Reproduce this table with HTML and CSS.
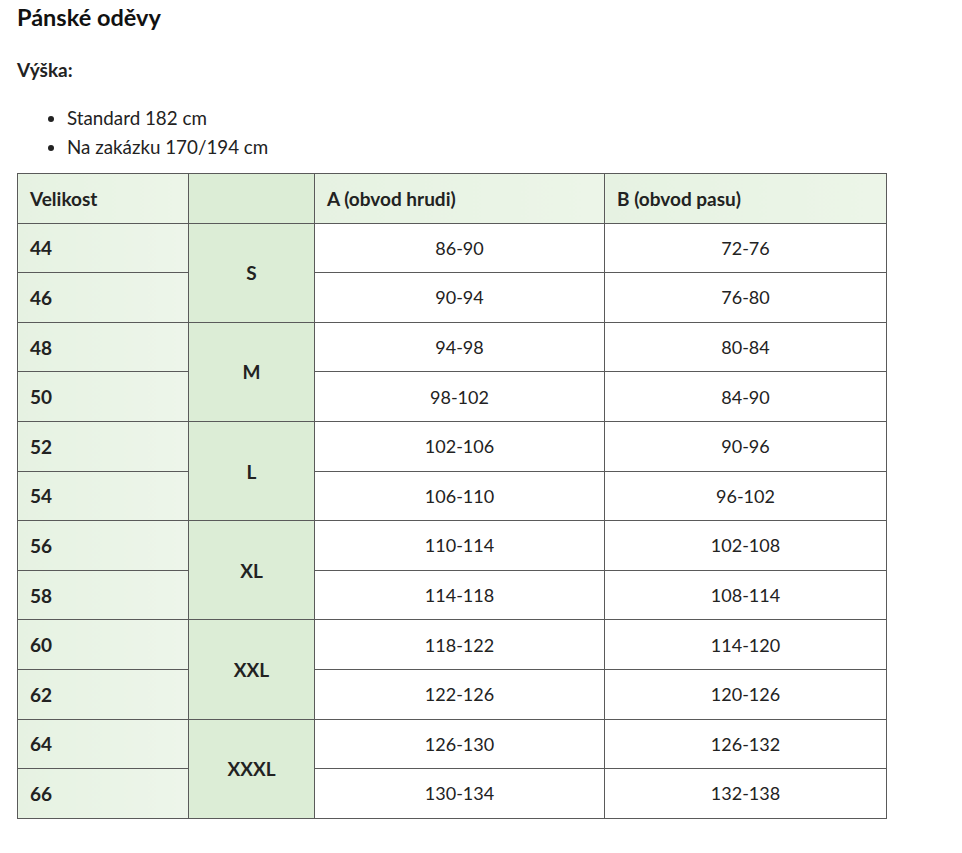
FILE: index.html
```html
<!DOCTYPE html>
<html lang="cs">
<head>
<meta charset="utf-8">
<title>Pánské oděvy</title>
<link rel="stylesheet" href="styles.css">
</head>
<body>
<div class="page">
  <h2 class="title">Pánské oděvy</h2>
  <p class="label">Výška:</p>
  <ul class="list">
    <li>Standard 182 cm</li>
    <li>Na zakázku 170/194 cm</li>
  </ul>
  <table class="sizes">
    <colgroup>
      <col class="c1"><col class="c2"><col class="c3"><col class="c4">
    </colgroup>
    <thead>
      <tr><th class="hd">Velikost</th><th class="hd hd-size"></th><th class="hd">A (obvod hrudi)</th><th class="hd">B (obvod pasu)</th></tr>
    </thead>
    <tbody>
      <tr><td class="num">44</td><td class="size" rowspan="2">S</td><td class="val">86-90</td><td class="val">72-76</td></tr>
      <tr><td class="num">46</td><td class="val">90-94</td><td class="val">76-80</td></tr>
      <tr><td class="num">48</td><td class="size" rowspan="2">M</td><td class="val">94-98</td><td class="val">80-84</td></tr>
      <tr><td class="num">50</td><td class="val">98-102</td><td class="val">84-90</td></tr>
      <tr><td class="num">52</td><td class="size" rowspan="2">L</td><td class="val">102-106</td><td class="val">90-96</td></tr>
      <tr><td class="num">54</td><td class="val">106-110</td><td class="val">96-102</td></tr>
      <tr><td class="num">56</td><td class="size" rowspan="2">XL</td><td class="val">110-114</td><td class="val">102-108</td></tr>
      <tr><td class="num">58</td><td class="val">114-118</td><td class="val">108-114</td></tr>
      <tr><td class="num">60</td><td class="size" rowspan="2">XXL</td><td class="val">118-122</td><td class="val">114-120</td></tr>
      <tr><td class="num">62</td><td class="val">122-126</td><td class="val">120-126</td></tr>
      <tr><td class="num">64</td><td class="size" rowspan="2">XXXL</td><td class="val">126-130</td><td class="val">126-132</td></tr>
      <tr><td class="num">66</td><td class="val">130-134</td><td class="val">132-138</td></tr>
    </tbody>
  </table>
</div>
</body>
</html>
```
FILE: styles.css
```css
html, body {
  margin: 0;
  padding: 0;
  background: #ffffff;
}
.page {
  padding: 3px 17px 0 17px;
  font-family: "Lato", "Noto Sans", sans-serif;
  color: #222222;
  font-size: 18px;
}
.title {
  margin: 0;
  font-size: 23.5px;
  line-height: 28px;
  font-weight: 700;
  color: #111111;
}
.label {
  margin: 27px 0 0 0;
  font-size: 19px;
  line-height: 24px;
  font-weight: 700;
}
.list {
  margin: 21px 0 0 0;
  padding: 0 0 0 50px;
  line-height: 29px;
}
.list li {
  font-size: 18.8px;
}
.sizes {
  margin-top: 12px;
  border-collapse: collapse;
  width: 869px;
  table-layout: fixed;
}
.c1 { width: 171px; }
.c2 { width: 126px; }
.c3 { width: 290px; }
.c4 { width: 282px; }
.sizes th, .sizes td {
  border: 1px solid #5a5a5a;
  height: 49.6px;
  padding: 0 12px;
  box-sizing: border-box;
  font-size: 18px;
}
.sizes .hd {
  text-align: left;
  font-weight: 700;
  font-size: 19px;
  background: linear-gradient(90deg, #e6f2e2, #ecf5e8);
}
.sizes .hd-size {
  background: #dcedd6;
}
.sizes .num {
  font-weight: 700;
  font-size: 19px;
  background: linear-gradient(90deg, #e6f2e2, #edf5ea);
}
.sizes .size {
  text-align: center;
  font-weight: 700;
  font-size: 19px;
  background: #dcedd6;
}
.val {
  text-align: center;
  background: #ffffff;
}
```
